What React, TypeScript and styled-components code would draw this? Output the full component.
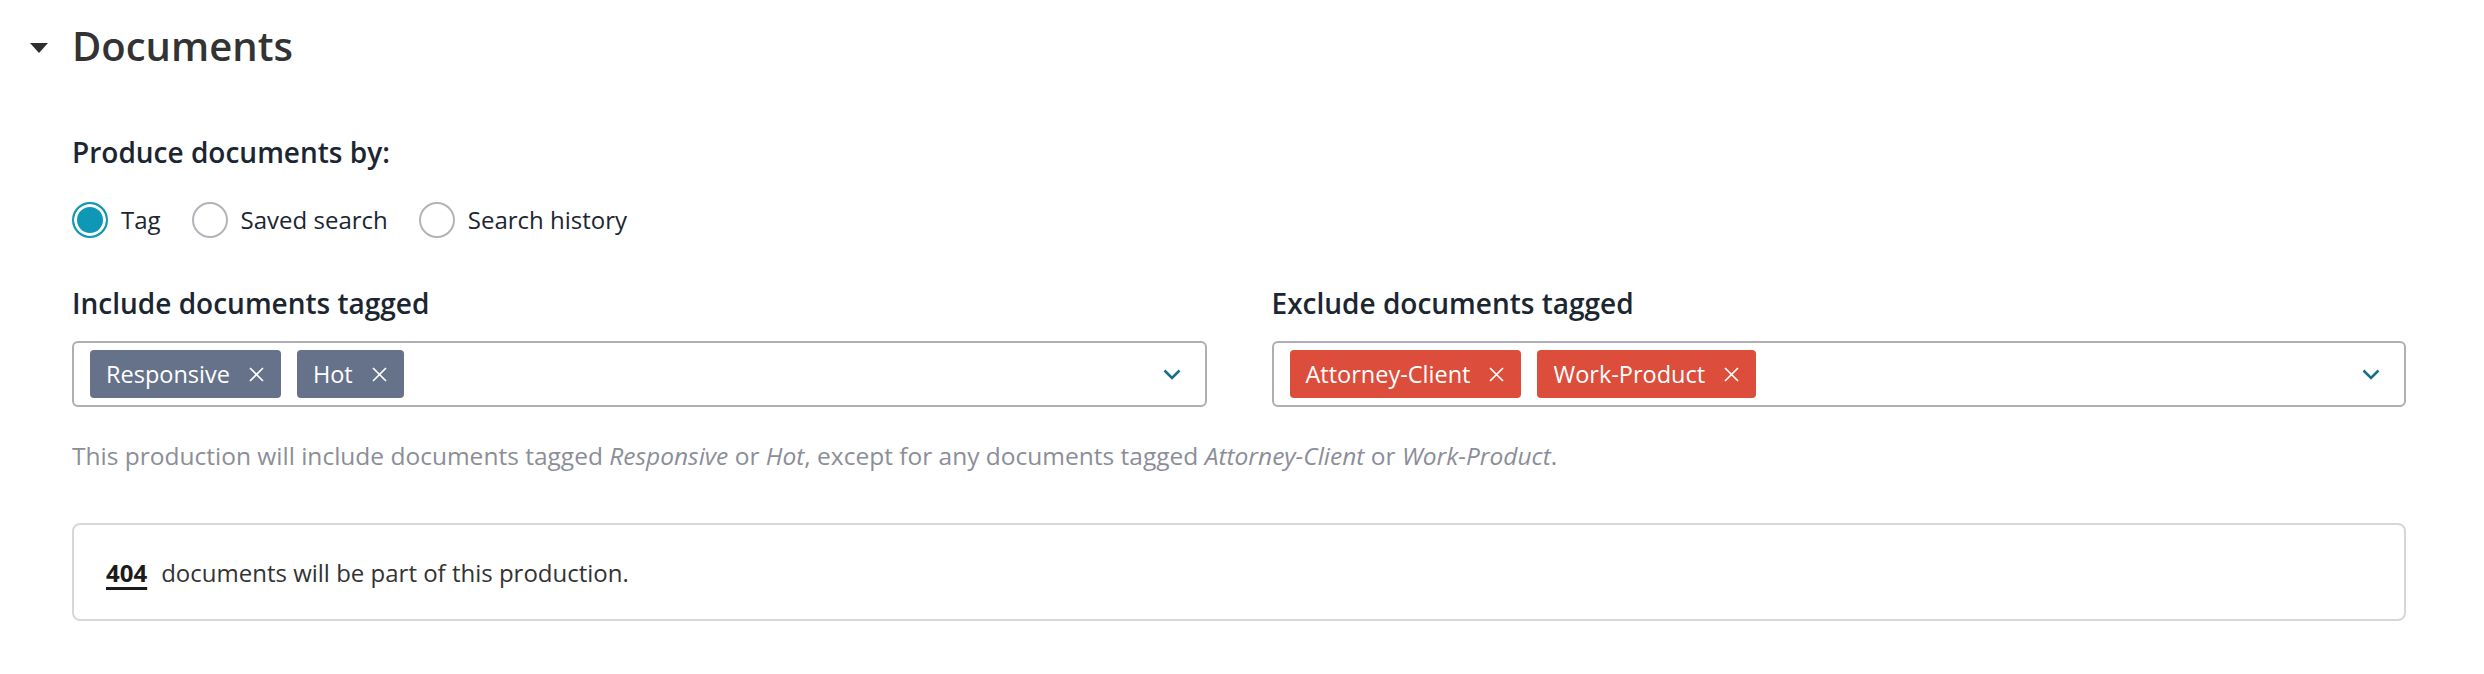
import React from "react";
import styled, { createGlobalStyle } from "styled-components";

const GlobalStyle = createGlobalStyle`
  html, body {
    margin: 0;
    padding: 0;
    background: #ffffff;
    font-family: "Open Sans", "Noto Sans", sans-serif;
  }
`;

const Page = styled.div`
  padding: 21px 78px 40px 72px;
`;

const SectionHeader = styled.div`
  display: flex;
  align-items: center;
  margin-left: -42px;
  gap: 24px;
  height: 50px;
`;

const Caret = styled.span`
  width: 0;
  height: 0;
  border-left: 9px solid transparent;
  border-right: 9px solid transparent;
  border-top: 10px solid #2e2e2e;
  margin-top: 4px;
`;

const Title = styled.h2`
  margin: 0;
  font-size: 40px;
  line-height: 50px;
  font-weight: 600;
  color: #333333;
`;

const Label = styled.div`
  font-size: 28px;
  line-height: 36px;
  font-weight: 600;
  color: #1b2631;
`;

const ProduceBlock = styled.div`
  margin-top: 63px;
`;

const RadioRow = styled.div`
  display: flex;
  align-items: center;
  margin-top: 32px;
  gap: 31px;
`;

const RadioOption = styled.label`
  display: flex;
  align-items: center;
  gap: 13px;
  font-size: 24px;
  line-height: 36px;
  color: #1b2631;
`;

const RadioCircle = styled.span<{ $checked?: boolean }>`
  box-sizing: border-box;
  width: 36px;
  height: 36px;
  border-radius: 50%;
  border: 2px solid ${(p) => (p.$checked ? "#0e98b6" : "#b3b3b9")};
  background: ${(p) => (p.$checked ? "#0e98b6" : "#ffffff")};
  box-shadow: ${(p) => (p.$checked ? "inset 0 0 0 3px #ffffff" : "none")};
`;

const Columns = styled.div`
  display: grid;
  grid-template-columns: 1fr 1fr;
  column-gap: 65px;
  margin-top: 47px;
`;

const Field = styled.div`
  display: flex;
  flex-direction: column;
  gap: 20px;
`;

const SelectBox = styled.div`
  box-sizing: border-box;
  height: 66px;
  border: 2px solid #aeaeb4;
  border-radius: 6px;
  display: flex;
  align-items: center;
  padding: 0 24px 0 16px;
  gap: 16px;
`;

const Tag = styled.span<{ $tone: "slate" | "red" }>`
  display: inline-flex;
  align-items: center;
  height: 48px;
  box-sizing: border-box;
  padding: 0 17px 0 16px;
  gap: 19px;
  border-radius: 4px;
  background: ${(p) => (p.$tone === "red" ? "#dc4d3b" : "#66728a")};
  color: #ffffff;
  font-size: 23.5px;
  line-height: 48px;
`;

const Spacer = styled.div`
  flex: 1;
`;

const Helper = styled.p`
  margin: 33px 0 0;
  font-size: 24.5px;
  line-height: 32px;
  color: #8b8e98;

  em {
    font-style: italic;
  }
`;

const CountBox = styled.div`
  box-sizing: border-box;
  margin-top: 51px;
  height: 98px;
  border: 2px solid #d7d7d9;
  border-radius: 8px;
  display: flex;
  align-items: center;
  padding: 0 32px;
  font-size: 24px;
  color: #333333;
`;

const Count = styled.a`
  font-weight: 700;
  color: #1b1b1b;
  text-decoration: underline;
  text-underline-offset: 5px;
  text-decoration-thickness: 3px;
  margin-right: 14px;
`;

const CloseIcon = () => (
  <svg width="15" height="15" viewBox="0 0 15 15">
    <path d="M1 1 L14 14 M14 1 L1 14" stroke="#ffffff" strokeWidth="1.7" />
  </svg>
);

const Chevron = () => (
  <svg width="18" height="11" viewBox="0 0 18 11">
    <path d="M1.5 1.5 L9 9 L16.5 1.5" fill="none" stroke="#176f8c" strokeWidth="2.6" />
  </svg>
);

type TagSelectProps = {
  label: string;
  tags: string[];
  tone: "slate" | "red";
};

const TagSelect: React.FC<TagSelectProps> = ({ label, tags, tone }) => (
  <Field>
    <Label>{label}</Label>
    <SelectBox>
      {tags.map((t) => (
        <Tag key={t} $tone={tone}>
          {t}
          <CloseIcon />
        </Tag>
      ))}
      <Spacer />
      <Chevron />
    </SelectBox>
  </Field>
);

const options = ["Tag", "Saved search", "Search history"];

export default function App() {
  return (
    <Page>
      <GlobalStyle />
      <SectionHeader>
        <Caret />
        <Title>Documents</Title>
      </SectionHeader>

      <ProduceBlock>
        <Label>Produce documents by:</Label>
        <RadioRow>
          {options.map((o, i) => (
            <RadioOption key={o}>
              <RadioCircle $checked={i === 0} />
              {o}
            </RadioOption>
          ))}
        </RadioRow>
      </ProduceBlock>

      <Columns>
        <TagSelect label="Include documents tagged" tags={["Responsive", "Hot"]} tone="slate" />
        <TagSelect
          label="Exclude documents tagged"
          tags={["Attorney-Client", "Work-Product"]}
          tone="red"
        />
      </Columns>

      <Helper>
        This production will include documents tagged <em>Responsive</em> or <em>Hot</em>, except for
        any documents tagged <em>Attorney-Client</em> or <em>Work-Product</em>.
      </Helper>

      <CountBox>
        <Count>404</Count>
        documents will be part of this production.
      </CountBox>
    </Page>
  );
}
